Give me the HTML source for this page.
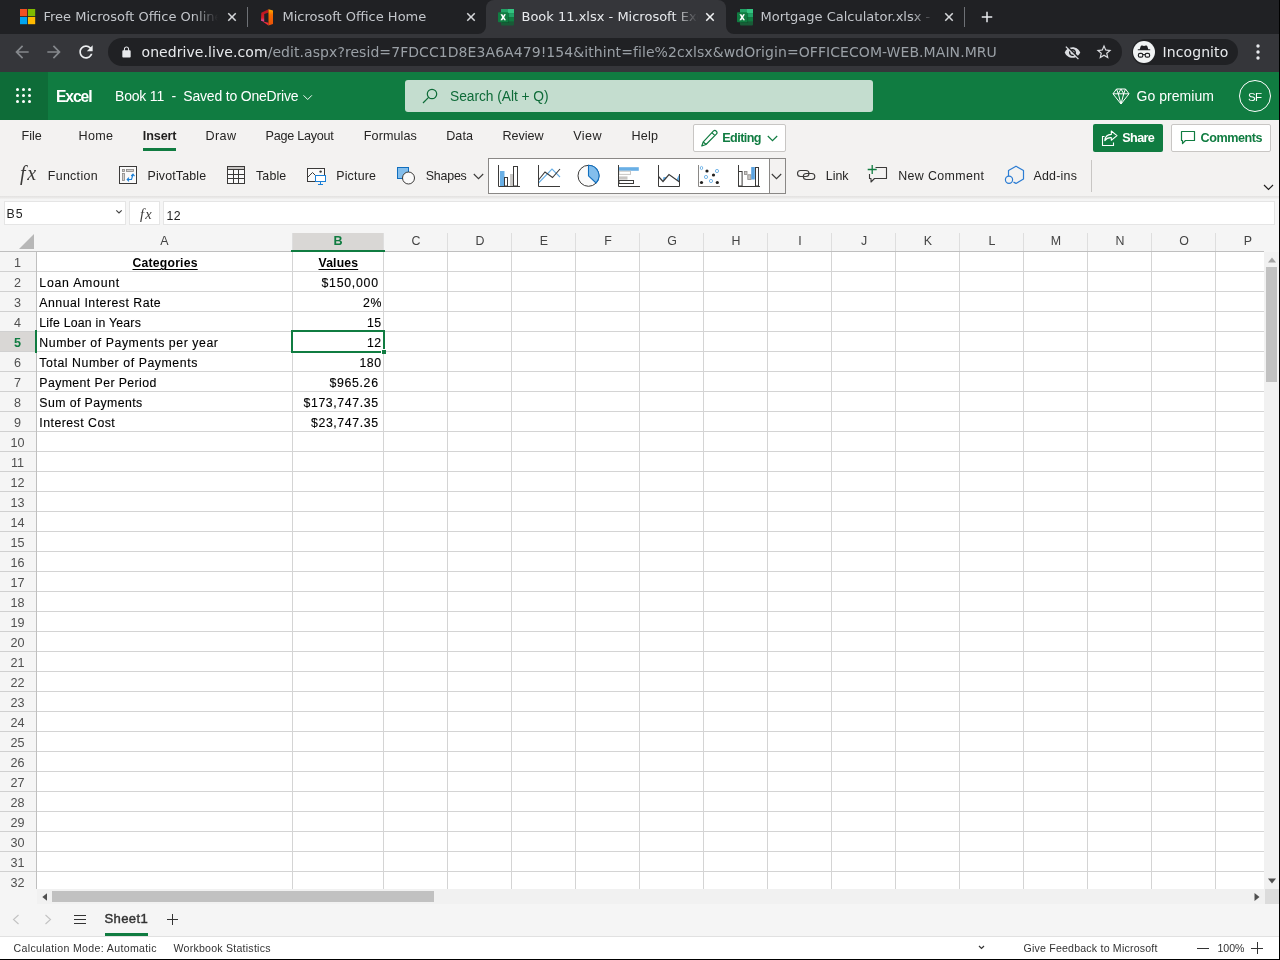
<!DOCTYPE html>
<html lang="en"><head><meta charset="utf-8"><title>Book 11.xlsx - Microsoft Excel Online</title>
<style>
*{box-sizing:border-box;margin:0;padding:0}
html,body{width:1280px;height:960px;overflow:hidden;background:#fff}
body{position:relative;font-family:"Liberation Sans",sans-serif;font-size:13px;color:#252423}
div,span,svg{position:absolute}
#root{left:0;top:0;width:1280px;height:960px;overflow:hidden;will-change:transform}
.t{white-space:pre}
/* ---------- browser chrome ---------- */
#tabstrip{left:0;top:0;width:1280px;height:34px;background:#202124}
#toolbar{left:0;top:34px;width:1280px;height:38px;background:#35363a}
.tabt{font-family:"DejaVu Sans",sans-serif;font-size:13px;color:#c3c6cb;top:8px;line-height:18px;white-space:pre;overflow:hidden;height:18px}
#acttab{left:486px;top:0;width:240px;height:34px;background:#35363a;border-radius:8px 8px 0 0}
.tabsep{top:7px;width:1px;height:20px;background:#6e7176}
#omni{left:108px;top:38px;width:1014px;height:28px;border-radius:14px;background:#202124}
#url{letter-spacing:.068px;left:141.5px;top:43px;font-family:"DejaVu Sans",sans-serif;font-size:14px;line-height:19px;color:#9aa0a6;white-space:pre}
#url b{font-weight:400;color:#e8eaed}
#incog{left:1132px;top:39px;width:106px;height:26px;border-radius:13px;background:#202124}
/* ---------- excel header ---------- */
#xlhead{left:0;top:72px;width:1280px;height:48px;background:#107c41}
#waffle{left:0;top:72px;width:48px;height:48px;background:#0e6c38}
#search{left:405px;top:80px;width:468px;height:32px;border-radius:3px;background:#c4ddcf}
/* ---------- ribbon ---------- */
#ribbon{left:0;top:120px;width:1280px;height:76px;background:#f3f2f1}
#ribshadow{left:0;top:196px;width:1280px;height:3px;background:linear-gradient(#e2e1e0,#e9e8e7 50%,#f2f2f1)}
.btn{top:124px;height:28px;border-radius:2px}
/* ---------- formula bar ---------- */
#fbar{left:0;top:199px;width:1280px;height:33px;background:#f5f5f5}
.fbox{top:201px;height:24px;background:#fff;border:1px solid #e5e5e5}
/* ---------- grid ---------- */
#grid{left:0;top:232px;width:1280px;height:657px;background:#fff}
#colhdr{left:0;top:228px;width:1264px;height:24px;background:#f5f5f5;border-bottom:1px solid #bfbfbf}
#rowhdr{left:0;top:252px;width:37px;height:637px;border-right:1px solid #bfbfbf;
 background:repeating-linear-gradient(to bottom,#f5f5f5 0,#f5f5f5 19px,#d0d0d0 19px,#d0d0d0 20px)}
#cells{left:37px;top:252px;width:1227px;height:637px;
 background:repeating-linear-gradient(to bottom,#fff 0,#fff 19px,#d4d4d4 19px,#d4d4d4 20px)}
.vl{top:252px;width:1px;height:637px;background:#d4d4d4}
.hl{top:233px;width:1px;height:18px;background:#dedede}
/* ---------- bottom ---------- */
#hscroll{left:37px;top:889px;width:1228px;height:15px;background:#f1f1f1}
#vscroll{left:1264px;top:252px;width:16px;height:637px;background:#f1f1f1}
#vtop{left:1264px;top:228px;width:16px;height:24px;background:#f5f5f5}
#sheetbar{left:0;top:889px;width:1280px;height:48px;background:#f5f5f5;border-bottom:1px solid #e1e1e1}
#status{left:0;top:937px;width:1280px;height:22px;background:#fff}
#botline{left:0;top:959px;width:1280px;height:1px;background:#000}
#rightline{left:1279px;top:0;width:1px;height:960px;background:#000}

</style></head>
<body>
<div id="root">
<!-- browser chrome -->
<div id="tabstrip"></div>
<div id="acttab"></div>
<svg style="left:478px;top:26px" width="8" height="8" viewBox="0 0 8 8"><path d="M8 0v8H0a8 8 0 0 0 8-8z" fill="#35363a"/></svg>
<svg style="left:726px;top:26px" width="8" height="8" viewBox="0 0 8 8"><path d="M0 0v8h8a8 8 0 0 1-8-8z" fill="#35363a"/></svg>
<div id="toolbar"></div>
<div id="omni"></div>
<div id="incog"></div>
<div class="tabsep" style="left:247px"></div>
<div class="tabsep" style="left:964px"></div>
<!-- favicons -->
<svg style="left:20px;top:9px" width="16" height="16" viewBox="0 0 16 16"><rect x="0" y="0" width="7.2" height="7.2" fill="#f25022"/><rect x="8" y="0" width="7.2" height="7.2" fill="#7fba00"/><rect x="0" y="8" width="7.2" height="7.2" fill="#00a4ef"/><rect x="8" y="8" width="7.2" height="7.2" fill="#ffb900"/></svg>
<svg style="left:261px;top:8.500px" width="13" height="17" viewBox="0 0 13 17"><defs><linearGradient id="og" x1="0" y1="0" x2="0" y2="1"><stop offset="0" stop-color="#ffb000"/><stop offset=".35" stop-color="#f56a00"/><stop offset="1" stop-color="#e8500a"/></linearGradient><linearGradient id="rg" x1="0" y1="0" x2="0" y2="1"><stop offset="0" stop-color="#b5121b"/><stop offset=".7" stop-color="#d6202a"/><stop offset="1" stop-color="#e055b8"/></linearGradient></defs><path d="M7.500.2.300 3.700 0 11.800l3.200.9V4.900l4.300-1.300z" fill="url(#rg)"/><path d="M1.600 12.600l5.900 3.800v-2.700l-4.300-1z" fill="#ef2a3c"/><path d="M7.500.2 12 1.400v13.500l-4.500 1.500z" fill="url(#og)"/></svg>
<svg class="xl" style="left:498px;top:8.5px" width="16" height="17" viewBox="0 0 16 17"><rect x="3" y="0" width="13" height="16.500" rx="1" fill="#185c37"/><rect x="3" y="0" width="6.500" height="4.200" fill="#21a366"/><rect x="9.500" y="0" width="6.500" height="4.200" fill="#33c481"/><rect x="3" y="4.200" width="6.500" height="4.100" fill="#107c41"/><rect x="9.500" y="4.200" width="6.500" height="4.100" fill="#21a366"/><rect x="3" y="8.300" width="6.500" height="4.100" fill="#185c37"/><rect x="9.500" y="8.300" width="6.500" height="4.100" fill="#107c41"/><rect x="3.600" y="4" width="7.500" height="10" rx=".8" fill="#0b4a2a" opacity=".55"/><rect x="0" y="3.300" width="10.300" height="10" rx=".8" fill="#107c41"/><path d="M2.500 5.300h1.900l.85 1.800.85-1.800h1.800L6.200 8.300l1.800 3h-1.900l-.9-1.850-.9 1.850H2.400l1.800-3z" fill="#fff"/></svg>
<svg class="xl" style="left:737px;top:8.5px" width="16" height="17" viewBox="0 0 16 17"><rect x="3" y="0" width="13" height="16.500" rx="1" fill="#185c37"/><rect x="3" y="0" width="6.500" height="4.200" fill="#21a366"/><rect x="9.500" y="0" width="6.500" height="4.200" fill="#33c481"/><rect x="3" y="4.200" width="6.500" height="4.100" fill="#107c41"/><rect x="9.500" y="4.200" width="6.500" height="4.100" fill="#21a366"/><rect x="3" y="8.300" width="6.500" height="4.100" fill="#185c37"/><rect x="9.500" y="8.300" width="6.500" height="4.100" fill="#107c41"/><rect x="3.600" y="4" width="7.500" height="10" rx=".8" fill="#0b4a2a" opacity=".55"/><rect x="0" y="3.300" width="10.300" height="10" rx=".8" fill="#107c41"/><path d="M2.500 5.300h1.900l.85 1.800.85-1.800h1.800L6.200 8.300l1.800 3h-1.900l-.9-1.850-.9 1.850H2.400l1.800-3z" fill="#fff"/></svg>
<!-- tab titles -->
<span class="tabt" style="left:43.5px;width:174px;-webkit-mask-image:linear-gradient(to right,#000 150px,transparent 174px)">Free Microsoft Office Online</span>
<span class="tabt" style="left:282.5px;width:180px">Microsoft Office Home</span>
<span class="tabt" style="left:521.5px;width:176px;color:#e8eaed;-webkit-mask-image:linear-gradient(to right,#000 152px,transparent 176px)">Book 11.xlsx - Microsoft Excel Online</span>
<span class="tabt" style="left:760.5px;width:174px;-webkit-mask-image:linear-gradient(to right,#000 150px,transparent 174px)">Mortgage Calculator.xlsx - Microsoft Excel Online</span>
<!-- tab close / new tab -->
<svg style="left:224px;top:9px" width="16" height="16" viewBox="0 0 24 24"><path d="M18.400 7.200 16.800 5.600 12 10.400 7.200 5.600 5.600 7.200 10.400 12 5.600 16.800 7.200 18.400 12 13.600 16.800 18.400 18.400 16.800 13.600 12z" fill="#d5d7da"/></svg>
<svg style="left:463px;top:9px" width="16" height="16" viewBox="0 0 24 24"><path d="M18.400 7.200 16.800 5.600 12 10.400 7.200 5.600 5.600 7.200 10.400 12 5.600 16.800 7.200 18.400 12 13.600 16.800 18.400 18.400 16.800 13.600 12z" fill="#d5d7da"/></svg>
<svg style="left:702px;top:9px" width="16" height="16" viewBox="0 0 24 24"><path d="M18.400 7.200 16.800 5.600 12 10.400 7.200 5.600 5.600 7.200 10.400 12 5.600 16.800 7.200 18.400 12 13.600 16.800 18.400 18.400 16.800 13.600 12z" fill="#f1f3f4"/></svg>
<svg style="left:941px;top:9px" width="16" height="16" viewBox="0 0 24 24"><path d="M18.400 7.200 16.800 5.600 12 10.400 7.200 5.600 5.600 7.200 10.400 12 5.600 16.800 7.200 18.400 12 13.600 16.800 18.400 18.400 16.800 13.600 12z" fill="#d5d7da"/></svg>
<svg style="left:978px;top:8px" width="18" height="18" viewBox="0 0 24 24"><path d="M19 13h-6v6h-2v-6H5v-2h6V5h2v6h6z" fill="#e8eaed"/></svg>
<!-- toolbar icons -->
<svg style="left:12px;top:42px" width="20" height="20" viewBox="0 0 24 24"><path d="M20 11H7.830l5.590-5.590L12 4l-8 8 8 8 1.410-1.410L7.830 13H20v-2z" fill="#85888c"/></svg>
<svg style="left:44px;top:42px" width="20" height="20" viewBox="0 0 24 24"><path d="M12 4l-1.410 1.410L16.170 11H4v2h12.170l-5.580 5.590L12 20l8-8z" fill="#85888c"/></svg>
<svg style="left:76px;top:42px" width="20" height="20" viewBox="0 0 24 24"><path d="M17.650 6.350C16.200 4.900 14.210 4 12 4c-4.420 0-7.990 3.580-7.990 8s3.570 8 7.990 8c3.730 0 6.840-2.550 7.730-6h-2.080c-.82 2.330-3.040 4-5.650 4-3.310 0-6-2.690-6-6s2.690-6 6-6c1.660 0 3.140.69 4.220 1.780L13 11h7V4l-2.350 2.350z" fill="#eceef0"/></svg>
<svg style="left:120.500px;top:45.500px" width="11" height="12" viewBox="3 0 18 23"><path d="M18 8h-1V6c0-2.760-2.240-5-5-5S7 3.240 7 6v2H6c-1.100 0-2 .9-2 2v10c0 1.100.9 2 2 2h12c1.100 0 2-.9 2-2V10c0-1.100-.9-2-2-2zM9 6c0-1.660 1.340-3 3-3s3 1.340 3 3v2H9V6z" fill="#e8eaed"/></svg>
<svg style="left:1063.500px;top:43.500px" width="17" height="17" viewBox="0 0 24 24"><path d="M12 7c2.760 0 5 2.240 5 5 0 .65-.13 1.260-.36 1.830l2.920 2.920c1.510-1.260 2.700-2.890 3.430-4.750-1.730-4.390-6-7.500-11-7.500-1.400 0-2.740.25-3.980.7l2.160 2.160C10.740 7.130 11.350 7 12 7zM2 4.270l2.280 2.280.46.460C3.080 8.300 1.780 10.020 1 12c1.730 4.390 6 7.500 11 7.500 1.550 0 3.030-.3 4.380-.84l.42.420L19.730 22 21 20.730 3.270 3 2 4.270zM7.530 9.800l1.550 1.550c-.05.210-.08.430-.08.650 0 1.660 1.340 3 3 3 .22 0 .44-.03.650-.08l1.550 1.550c-.67.330-1.410.53-2.200.53-2.760 0-5-2.240-5-5 0-.79.200-1.530.53-2.200zm4.310-.78 3.150 3.150.02-.16c0-1.660-1.340-3-3-3l-.17.010z" fill="#dadce0"/></svg>
<svg style="left:1095px;top:43px" width="18" height="18" viewBox="0 0 24 24"><path d="M22 9.240l-7.190-.62L12 2 9.190 8.630 2 9.240l5.460 4.730L5.820 21 12 17.270 18.180 21l-1.630-7.030L22 9.240zM12 15.400l-3.760 2.270 1-4.280-3.320-2.880 4.380-.38L12 6.100l1.710 4.040 4.380.38-3.320 2.880 1 4.280L12 15.400z" fill="#dadce0"/></svg>
<svg style="left:1133px;top:41px" width="22" height="22" viewBox="0 0 22 22"><circle cx="11" cy="11" r="11" fill="#f1f3f4"/><path d="M7.700 5.200c.2-.6.800-.9 1.400-.7l1.900.6 1.900-.6c.6-.2 1.200.1 1.400.7l1 3h1.900v1.100H4.800V8.200h1.900z" fill="#202124"/><rect x="5.400" y="12.400" width="4.400" height="3.800" rx="1.500" fill="none" stroke="#202124" stroke-width="1.200"/><rect x="12.200" y="12.400" width="4.400" height="3.800" rx="1.500" fill="none" stroke="#202124" stroke-width="1.200"/><path d="M9.800 13.800c.8-.4 1.600-.4 2.400 0" fill="none" stroke="#202124" stroke-width="1.100"/></svg>
<svg style="left:1255px;top:43px" width="6" height="18" viewBox="0 0 6 18"><circle cx="3" cy="3" r="1.700" fill="#e8eaed"/><circle cx="3" cy="9" r="1.700" fill="#e8eaed"/><circle cx="3" cy="15" r="1.700" fill="#e8eaed"/></svg>
<span id="url"><b>onedrive.live.com</b>/edit.aspx?resid=7FDCC1D8E3A6A479!154&amp;ithint=file%2cxlsx&amp;wdOrigin=OFFICECOM-WEB.MAIN.MRU</span>
<!-- excel header -->
<div id="xlhead"></div>
<div id="waffle"></div>
<div id="search"></div>
<svg style="left:15px;top:87px" width="18" height="18" viewBox="0 0 18 18" fill="#fff"><circle cx="2.500" cy="2.500" r="1.500"/><circle cx="8.500" cy="2.500" r="1.500"/><circle cx="14.500" cy="2.500" r="1.500"/><circle cx="2.500" cy="8.500" r="1.500"/><circle cx="8.500" cy="8.500" r="1.500"/><circle cx="14.500" cy="8.500" r="1.500"/><circle cx="2.500" cy="14.500" r="1.500"/><circle cx="8.500" cy="14.500" r="1.500"/><circle cx="14.500" cy="14.500" r="1.500"/></svg>
<svg style="left:303px;top:94px" width="10" height="7" viewBox="0 0 10 7"><path d="M.5 1.300l4.200 4.200 4.200-4.200" fill="none" stroke="#fff" stroke-width=".95"/></svg>
<svg style="left:422px;top:88px" width="16" height="16" viewBox="0 0 16 16"><circle cx="10" cy="6" r="4.700" fill="none" stroke="#0e6b38" stroke-width="1.200"/><path d="M6.600 9.400 1 15" stroke="#0e6b38" stroke-width="1.200" fill="none"/></svg>
<svg style="left:1112px;top:88px" width="18" height="17" viewBox="0 0 18 17"><path d="M4.500 1h9L17 5.800 9 16 1 5.800zM1 5.800h16M4.500 1 6.300 5.800 9 16l2.700-10.200L13.500 1M6.300 5.800 9 1l2.700 4.800" fill="none" stroke="#fff" stroke-width="1" stroke-linejoin="round"/></svg>
<div style="left:1239px;top:80px;width:32px;height:32px;border-radius:16px;border:1px solid #fff"></div>
<!-- ribbon -->
<div id="ribbon"></div>
<div id="ribshadow"></div>
<div style="left:143px;top:148px;width:33px;height:3px;background:#107c41"></div>
<div class="btn" style="left:693px;width:93px;background:#fff;border:1px solid #c8c6c4"></div>
<div class="btn" style="left:1093px;width:70px;background:#107c41"></div>
<div class="btn" style="left:1171px;width:100px;background:#fff;border:1px solid #c8c6c4"></div>
<!-- Editing pencil -->
<svg style="left:700px;top:129px" width="19" height="19" viewBox="0 0 19 19"><path d="M13.300 2.200a2.100 2.100 0 0 1 3 3L6 15.500 1.800 17l1.500-4.200zM11.900 3.600l3 3M3.300 12.800l2.700 2.700" fill="none" stroke="#107c41" stroke-width="1.200" stroke-linejoin="round"/></svg>
<svg style="left:767px;top:135px" width="11" height="7" viewBox="0 0 11 7"><path d="M.8 1l4.700 4.700L10.200 1" fill="none" stroke="#107c41" stroke-width="1.200"/></svg>
<!-- Share icon -->
<svg style="left:1101px;top:130px" width="17" height="16" viewBox="0 0 17 16"><path d="M3.500 6.500H1.500v9h11v-3" fill="none" stroke="#fff" stroke-width="1.100"/><path d="M10.300 1 16 5.600l-5.700 4.600V7.600c-3-.2-5 .8-6.500 3 .3-3.600 2.600-6 6.500-6.200z" fill="none" stroke="#fff" stroke-width="1.100" stroke-linejoin="round"/></svg>
<!-- Comments icon -->
<svg style="left:1180px;top:130px" width="16" height="15" viewBox="0 0 16 15"><path d="M1.500 1.500h13v9h-9l-3 3v-3h-1z" fill="none" stroke="#107c41" stroke-width="1.200" stroke-linejoin="round"/></svg>
<!-- PivotTable -->
<svg style="left:119px;top:166px" width="18" height="18" viewBox="0 0 18 18"><rect x=".5" y=".5" width="17" height="17" fill="#fafafa" stroke="#3b3a39"/><rect x="3.500" y="3.500" width="2" height="2" fill="#d2d0ce" stroke="#8a8886" stroke-width=".8"/><rect x="7.500" y="3.500" width="7" height="2" fill="#d2d0ce" stroke="#8a8886" stroke-width=".8"/><rect x="3.500" y="7.500" width="2" height="7" fill="#d2d0ce" stroke="#8a8886" stroke-width=".8"/><path d="M8.300 13.500h4.200l1.500-5M10 11.700l-1.800 1.800 1.800 1.800M12.200 10 14 8.200l1.500 2" fill="none" stroke="#1a7fd6" stroke-width="1.100"/></svg>
<!-- Table -->
<svg style="left:227px;top:166px" width="18" height="18" viewBox="0 0 18 18"><rect x=".5" y=".5" width="17" height="17" fill="#fafafa" stroke="#3b3a39"/><rect x="1" y="1" width="16" height="2.500" fill="#c8c6c4"/><path d="M.5 3.500h17M.5 8.500h17M.5 12.500h17M6.500 3.500v14M11.500 3.500v14" fill="none" stroke="#3b3a39" stroke-width="1"/></svg>
<!-- Picture -->
<svg style="left:306px;top:167px" width="21" height="19" viewBox="0 0 21 19"><rect x="1.500" y="1.500" width="17" height="13" fill="#fafafa" stroke="#3b3a39"/><path d="M1.500 10.500 6.500 5.500l2.500 2.500" fill="none" stroke="#3b3a39"/><circle cx="14.600" cy="4.600" r="1.200" fill="#3b3a39"/><rect x="9.500" y="8.500" width="10" height="6" fill="#fff" stroke="#1a7fd6"/><path d="M14.500 14.500v3M12 17.500h5" fill="none" stroke="#1a7fd6"/></svg>
<!-- Shapes -->
<svg style="left:396px;top:166px" width="20" height="20" viewBox="0 0 20 20"><rect x="1.500" y="1.500" width="11" height="11" fill="#83beec" stroke="#106ebe"/><circle cx="12.500" cy="12" r="6" fill="#fafafa" stroke="#3b3a39"/></svg>
<svg style="left:473px;top:173px" width="11" height="7" viewBox="0 0 11 7"><path d="M.8 1l4.700 4.700L10.200 1" fill="none" stroke="#3b3a39" stroke-width="1.100"/></svg>
<!-- chart gallery -->
<div style="left:488px;top:158px;width:298px;height:36px;background:#fff;border:1px solid #8a8886"></div>
<div style="left:769px;top:159px;width:16px;height:34px;background:#f3f2f1;border-left:1px solid #8a8886"></div>
<svg style="left:771px;top:173px" width="11" height="7" viewBox="0 0 11 7"><path d="M.8 1l4.700 4.700L10.200 1" fill="none" stroke="#3b3a39" stroke-width="1.100"/></svg>
<!-- column chart -->
<svg style="left:497px;top:164px" width="24" height="24" viewBox="0 0 24 24"><rect x="3" y="7" width="4.500" height="15" fill="#69afe5"/><rect x="7.500" y="13.500" width="3" height="8.500" fill="#fff" stroke="#3b3a39"/><rect x="13" y="10" width="3.500" height="12" fill="#c8c6c4"/><rect x="16.500" y="2.500" width="4" height="19.500" fill="#fff" stroke="#3b3a39"/><path d="M1.500 1v21.500H23" fill="none" stroke="#3b3a39"/></svg>
<!-- line chart -->
<svg style="left:537px;top:164px" width="24" height="24" viewBox="0 0 24 24"><path d="M1.500 19 15 5l8 8" fill="none" stroke="#69afe5" stroke-width="1.100"/><path d="M1.500 16 8 8l7.500 5.500L23 5" fill="none" stroke="#3b3a39" stroke-width="1.100"/><path d="M1.500 1v21.500H23" fill="none" stroke="#3b3a39"/></svg>
<!-- pie -->
<svg style="left:576px;top:164px" width="25" height="24" viewBox="0 0 25 24"><circle cx="12.500" cy="11.800" r="10.500" fill="#fafafa" stroke="#3b3a39"/><path d="M12.500 11.800V1.300a10.500 10.500 0 0 1 7.600 17.700z" fill="#83beec" stroke="#106ebe" stroke-width="1.100" stroke-linejoin="round"/></svg>
<!-- bar chart -->
<svg style="left:617px;top:164px" width="24" height="24" viewBox="0 0 24 24"><rect x="2" y="3.200" width="19.800" height="3.600" fill="#69afe5"/><rect x="2" y="7.200" width="11.500" height="3.200" fill="#fff" stroke="#c8c6c4"/><rect x="2" y="12.400" width="8.500" height="3.200" fill="#c8c6c4"/><rect x="2" y="16.500" width="14.500" height="3" fill="#fff" stroke="#3b3a39"/><path d="M1.500 1v21.500H23" fill="none" stroke="#3b3a39"/></svg>
<!-- area chart -->
<svg style="left:657px;top:164px" width="24" height="24" viewBox="0 0 24 24"><path d="M5.500 17 10 13l-3.500 0zM19.500 16l3-6v8z" fill="#69afe5"/><path d="M5.500 17.500 9.500 13.200 7 13.200zM19.800 15.500l2.700-5.300v7.500z" fill="#69afe5"/><path d="M1.500 12.500l4.500 5 6-7 10.500 7.500" fill="none" stroke="#3b3a39" stroke-width="1.200"/><path d="M1.500 1v21.500h21V10" fill="none" stroke="#3b3a39"/></svg>
<!-- scatter -->
<svg style="left:697px;top:164px" width="24" height="24" viewBox="0 0 24 24"><path d="M1.500 1v21.500H23" fill="none" stroke="#8a8886"/><circle cx="10" cy="7" r="1.600" fill="#201f1e"/><circle cx="16.500" cy="11" r="1.600" fill="#201f1e"/><circle cx="4.500" cy="18.500" r="1.600" fill="#201f1e"/><circle cx="20.300" cy="18.500" r="1.600" fill="#201f1e"/><ellipse cx="4.500" cy="4" rx="1.200" ry="1.600" fill="#fff" stroke="#69afe5" stroke-width=".9"/><circle cx="20" cy="7" r="1.600" fill="#fff" stroke="#69afe5" stroke-width=".9"/><circle cx="9" cy="13" r="1.600" fill="#fff" stroke="#69afe5" stroke-width=".9"/><circle cx="14" cy="17" r="1.600" fill="#fff" stroke="#69afe5" stroke-width=".9"/></svg>
<!-- waterfall -->
<svg style="left:737px;top:164px" width="24" height="24" viewBox="0 0 24 24"><rect x="1.500" y="7.500" width="3.600" height="14.500" fill="#fff" stroke="#3b3a39"/><rect x="7.400" y="7.400" width="2.600" height="3" fill="#c8c6c4" stroke="#8a8886" stroke-width=".8"/><rect x="10.800" y="10.800" width="3.200" height="4.700" fill="#c8c6c4" stroke="#8a8886" stroke-width=".8"/><rect x="14.200" y="3" width="3.600" height="12.500" fill="#5ba3e0"/><rect x="18.500" y="3.500" width="3" height="18.500" fill="#fff" stroke="#3b3a39"/><path d="M1.500 1v21.500H23" fill="none" stroke="#3b3a39"/></svg>
<!-- link -->
<svg style="left:796px;top:169px" width="20" height="12" viewBox="0 0 20 12"><rect x="1.500" y="1.500" width="11.500" height="6" rx="3" fill="none" stroke="#3b3a39" stroke-width="1.100"/><rect x="7.300" y="4.500" width="11.500" height="6" rx="3" fill="none" stroke="#3b3a39" stroke-width="1.100"/></svg>
<!-- new comment -->
<svg style="left:866px;top:164px" width="22" height="20" viewBox="0 0 22 20"><path d="M9.500 3.500h11v11h-12l-3.500 3.500v-3.500h-1.500v-4.500" fill="none" stroke="#3b3a39" stroke-width="1.100" stroke-linejoin="round"/><path d="M6.200 1v9M1.700 5.500h9" fill="none" stroke="#107c41" stroke-width="1.300"/></svg>
<!-- add-ins -->
<svg style="left:1003px;top:165px" width="22" height="20" viewBox="0 0 22 20"><path d="M5.500 11V5.500L13 1.200l7.500 4.300v8.600l-7.500 4.300-2.500-1.300" fill="none" stroke="#2b7cd3" stroke-width="1.200" stroke-linejoin="round"/><circle cx="6" cy="14.800" r="3.600" fill="none" stroke="#2b7cd3" stroke-width="1.200"/></svg>
<div style="left:1091px;top:160px;width:1px;height:32px;background:#c8c6c4"></div>
<svg style="left:1263px;top:184px" width="11" height="7" viewBox="0 0 11 7"><path d="M1 1l4.500 4.500L10 1" fill="none" stroke="#201f1e" stroke-width="1.200"/></svg>

<!-- formula bar -->
<div id="fbar"></div>
<div class="fbox" style="left:4px;width:122px"></div>
<div class="fbox" style="left:129px;width:31px"></div>
<div class="fbox" style="left:163px;width:1112px"></div>
<svg style="left:115px;top:209px" width="8" height="6" viewBox="0 0 8 6"><path d="M1.300 1.300 4 4l2.700-2.700" fill="none" stroke="#444" stroke-width="1.200"/></svg>
<!-- grid -->
<div id="grid"></div>
<div id="colhdr"></div>
<div id="rowhdr"></div>
<div id="cells"></div>
<svg style="left:19px;top:234px" width="15" height="15" viewBox="0 0 15 15"><path d="M15 0V15H0z" fill="#b7b7b7"/></svg>
<div class="vl" style="left:292px"></div>
<div class="hl" style="left:292px"></div>
<div class="vl" style="left:383px"></div>
<div class="hl" style="left:383px"></div>
<div class="vl" style="left:447px"></div>
<div class="hl" style="left:447px"></div>
<div class="vl" style="left:511px"></div>
<div class="hl" style="left:511px"></div>
<div class="vl" style="left:575px"></div>
<div class="hl" style="left:575px"></div>
<div class="vl" style="left:639px"></div>
<div class="hl" style="left:639px"></div>
<div class="vl" style="left:703px"></div>
<div class="hl" style="left:703px"></div>
<div class="vl" style="left:767px"></div>
<div class="hl" style="left:767px"></div>
<div class="vl" style="left:831px"></div>
<div class="hl" style="left:831px"></div>
<div class="vl" style="left:895px"></div>
<div class="hl" style="left:895px"></div>
<div class="vl" style="left:959px"></div>
<div class="hl" style="left:959px"></div>
<div class="vl" style="left:1023px"></div>
<div class="hl" style="left:1023px"></div>
<div class="vl" style="left:1087px"></div>
<div class="hl" style="left:1087px"></div>
<div class="vl" style="left:1151px"></div>
<div class="hl" style="left:1151px"></div>
<div class="vl" style="left:1215px"></div>
<div class="hl" style="left:1215px"></div>
<div class="vl" style="left:1279px"></div>
<div style="left:293px;top:233px;width:90px;height:18px;background:#d9d7d5"></div>
<div style="left:291px;top:250px;width:94px;height:2px;background:#107c41"></div>
<div style="left:0;top:332px;width:35px;height:19px;background:#d9d7d5"></div>
<div style="left:35px;top:330px;width:2px;height:23px;background:#107c41"></div>
<div style="left:291px;top:330px;width:94px;height:23px;border:2px solid #107c41;background:#fff"></div>
<div style="left:381px;top:349px;width:6px;height:6px;background:#107c41;border:1px solid #fff;border-right:0;border-bottom:0;width:5px;height:5px"></div>
<div id="vscroll"></div><div id="vtop"></div>
<div id="sheetbar"></div>
<div id="hscroll"></div>
<div style="left:1265px;top:889px;width:15px;height:15px;background:#dcdcdc"></div>
<div style="left:52px;top:891px;width:382px;height:11px;background:#c1c1c1"></div>
<div style="left:1266px;top:267px;width:11px;height:115px;background:#c1c1c1"></div>
<svg style="left:41.500px;top:893px" width="5" height="8" viewBox="0 0 5 8"><path d="M5 .3v7.400L.3 4z" fill="#505050"/></svg>
<svg style="left:1254px;top:893px" width="6" height="8" viewBox="0 0 6 8"><path d="M.5 0v8l5-4z" fill="#505050"/></svg>
<svg style="left:1268px;top:257px" width="8" height="6" viewBox="0 0 8 6"><path d="M0 5.500h8L4 .5z" fill="#a3a3a3"/></svg>
<svg style="left:1268px;top:878px" width="8" height="6" viewBox="0 0 8 6"><path d="M0 .5h8l-4 5z" fill="#505050"/></svg>
<!-- sheet bar -->
<svg style="left:12px;top:914px" width="8" height="11" viewBox="0 0 8 11"><path d="M6.500 1 1.500 5.500l5 4.500" fill="none" stroke="#c2c2c2" stroke-width="1.100"/></svg>
<svg style="left:44px;top:914px" width="8" height="11" viewBox="0 0 8 11"><path d="M1.500 1l5 4.500-5 4.500" fill="none" stroke="#c2c2c2" stroke-width="1.100"/></svg>
<div style="left:74px;top:915px;width:12px;height:1px;background:#333"></div>
<div style="left:74px;top:919px;width:12px;height:1px;background:#333"></div>
<div style="left:74px;top:923px;width:12px;height:1px;background:#333"></div>
<div style="left:105px;top:933px;width:43px;height:3px;background:#107c41"></div>
<div style="left:167px;top:919px;width:11px;height:1px;background:#333"></div>
<div style="left:172px;top:914px;width:1px;height:11px;background:#333"></div>
<div id="status"></div>
<div id="botline"></div>
<div id="rightline"></div>
<svg style="left:978px;top:945px" width="7" height="5" viewBox="0 0 7 5"><path d="M1 1l2.500 2.500L6 1" fill="none" stroke="#333" stroke-width="1.200"/></svg>
<div style="left:1197px;top:948px;width:12px;height:1px;background:#333"></div>
<div style="left:1251px;top:948px;width:12px;height:1px;background:#333"></div>
<div style="left:1256.500px;top:942px;width:1px;height:12px;background:#333"></div>
<span class="t" style="left:1162.5px;top:43px;font-size:14px;line-height:18px;color:#e8eaed;font-family:'DejaVu Sans',sans-serif;letter-spacing:.1px;">Incognito</span>
<span class="t" style="left:56.0px;top:87px;font-size:15.7px;line-height:20px;color:#ffffff;font-weight:700;letter-spacing:-1.12px;">Excel</span>
<span class="t" style="left:115.0px;top:87px;font-size:14px;line-height:18px;color:#ffffff;letter-spacing:-0.19px;">Book 11  -  Saved to OneDrive</span>
<span class="t" style="left:450.0px;top:88px;font-size:13.8px;line-height:18px;color:#0e6b38;letter-spacing:-0.05px;">Search (Alt + Q)</span>
<span class="t" style="left:1136.5px;top:87px;font-size:14px;line-height:18px;color:#ffffff;letter-spacing:0.05px;">Go premium</span>
<span class="t" style="left:1248.0px;top:90px;font-size:11.5px;line-height:15px;color:#ffffff;letter-spacing:-0.70px;">SF</span>
<span class="t" style="left:21.5px;top:128px;font-size:12.6px;line-height:16px;color:#252423;letter-spacing:-0.02px;">File</span>
<span class="t" style="left:78.5px;top:128px;font-size:12.6px;line-height:16px;color:#252423;letter-spacing:0.30px;">Home</span>
<span class="t" style="left:142.8px;top:128px;font-size:12.6px;line-height:16px;color:#201f1e;font-weight:700;letter-spacing:-0.11px;">Insert</span>
<span class="t" style="left:205.5px;top:128px;font-size:12.6px;line-height:16px;color:#252423;letter-spacing:0.37px;">Draw</span>
<span class="t" style="left:265.5px;top:128px;font-size:12.6px;line-height:16px;color:#252423;letter-spacing:-0.25px;">Page Layout</span>
<span class="t" style="left:363.8px;top:128px;font-size:12.6px;line-height:16px;color:#252423;letter-spacing:0.07px;">Formulas</span>
<span class="t" style="left:446.2px;top:128px;font-size:12.6px;line-height:16px;color:#252423;letter-spacing:0.05px;">Data</span>
<span class="t" style="left:502.5px;top:128px;font-size:12.6px;line-height:16px;color:#252423;letter-spacing:-0.06px;">Review</span>
<span class="t" style="left:573.2px;top:128px;font-size:12.6px;line-height:16px;color:#252423;letter-spacing:0.47px;">View</span>
<span class="t" style="left:631.5px;top:128px;font-size:12.6px;line-height:16px;color:#252423;letter-spacing:0.20px;">Help</span>
<span class="t" style="left:722.3px;top:130px;font-size:12.6px;line-height:16px;color:#107c41;font-weight:700;letter-spacing:-0.58px;">Editing</span>
<span class="t" style="left:1122.3px;top:130px;font-size:12.6px;line-height:16px;color:#ffffff;font-weight:700;letter-spacing:-0.63px;">Share</span>
<span class="t" style="left:1200.6px;top:130px;font-size:12.6px;line-height:16px;color:#107c41;font-weight:700;letter-spacing:-0.45px;">Comments</span>
<span class="t" style="left:47.8px;top:168px;font-size:12.4px;line-height:16px;color:#252423;letter-spacing:0.32px;">Function</span>
<span class="t" style="left:147.5px;top:168px;font-size:12.4px;line-height:16px;color:#252423;letter-spacing:0.15px;">PivotTable</span>
<span class="t" style="left:256.0px;top:168px;font-size:12.4px;line-height:16px;color:#252423;letter-spacing:0.16px;">Table</span>
<span class="t" style="left:336.2px;top:168px;font-size:12.4px;line-height:16px;color:#252423;letter-spacing:0.20px;">Picture</span>
<span class="t" style="left:425.8px;top:168px;font-size:12.4px;line-height:16px;color:#252423;letter-spacing:-0.21px;">Shapes</span>
<span class="t" style="left:825.8px;top:168px;font-size:12.4px;line-height:16px;color:#252423;letter-spacing:0.01px;">Link</span>
<span class="t" style="left:898.2px;top:168px;font-size:12.4px;line-height:16px;color:#252423;letter-spacing:0.38px;">New Comment</span>
<span class="t" style="left:1033.4px;top:168px;font-size:12.4px;line-height:16px;color:#252423;letter-spacing:0.26px;">Add-ins</span>
<span class="t" style="left:20.0px;top:160px;font-size:20px;line-height:26px;color:#3b3a39;font-family:'Liberation Serif',serif;font-style:italic;letter-spacing:1.60px;">fx</span>
<span class="t" style="left:140.0px;top:205px;font-size:14.5px;line-height:19px;color:#3b3a39;font-family:'Liberation Serif',serif;font-style:italic;letter-spacing:1.33px;">fx</span>
<span class="t" style="left:6.5px;top:206px;font-size:12.3px;line-height:16px;color:#222;letter-spacing:0.95px;">B5</span>
<span class="t" style="left:166.5px;top:208px;font-size:12.3px;line-height:16px;color:#222;letter-spacing:0.31px;">12</span>
<span class="t" style="left:64.5px;width:200px;text-align:center;top:233px;font-size:12.4px;line-height:16px;color:#444;">A</span>
<span class="t" style="left:238.0px;width:200px;text-align:center;top:233px;font-size:12.6px;line-height:16px;color:#107c41;font-weight:700;">B</span>
<span class="t" style="left:316.0px;width:200px;text-align:center;top:233px;font-size:12.4px;line-height:16px;color:#444;">C</span>
<span class="t" style="left:380.0px;width:200px;text-align:center;top:233px;font-size:12.4px;line-height:16px;color:#444;">D</span>
<span class="t" style="left:444.0px;width:200px;text-align:center;top:233px;font-size:12.4px;line-height:16px;color:#444;">E</span>
<span class="t" style="left:508.0px;width:200px;text-align:center;top:233px;font-size:12.4px;line-height:16px;color:#444;">F</span>
<span class="t" style="left:572.0px;width:200px;text-align:center;top:233px;font-size:12.4px;line-height:16px;color:#444;">G</span>
<span class="t" style="left:636.0px;width:200px;text-align:center;top:233px;font-size:12.4px;line-height:16px;color:#444;">H</span>
<span class="t" style="left:700.0px;width:200px;text-align:center;top:233px;font-size:12.4px;line-height:16px;color:#444;">I</span>
<span class="t" style="left:764.0px;width:200px;text-align:center;top:233px;font-size:12.4px;line-height:16px;color:#444;">J</span>
<span class="t" style="left:828.0px;width:200px;text-align:center;top:233px;font-size:12.4px;line-height:16px;color:#444;">K</span>
<span class="t" style="left:892.0px;width:200px;text-align:center;top:233px;font-size:12.4px;line-height:16px;color:#444;">L</span>
<span class="t" style="left:956.0px;width:200px;text-align:center;top:233px;font-size:12.4px;line-height:16px;color:#444;">M</span>
<span class="t" style="left:1020.0px;width:200px;text-align:center;top:233px;font-size:12.4px;line-height:16px;color:#444;">N</span>
<span class="t" style="left:1084.0px;width:200px;text-align:center;top:233px;font-size:12.4px;line-height:16px;color:#444;">O</span>
<span class="t" style="left:1148.0px;width:200px;text-align:center;top:233px;font-size:12.4px;line-height:16px;color:#444;">P</span>
<span class="t" style="left:-82.5px;width:200px;text-align:center;top:255px;font-size:12.6px;line-height:16px;color:#505050;">1</span>
<span class="t" style="left:-82.5px;width:200px;text-align:center;top:275px;font-size:12.6px;line-height:16px;color:#505050;">2</span>
<span class="t" style="left:-82.5px;width:200px;text-align:center;top:295px;font-size:12.6px;line-height:16px;color:#505050;">3</span>
<span class="t" style="left:-82.5px;width:200px;text-align:center;top:315px;font-size:12.6px;line-height:16px;color:#505050;">4</span>
<span class="t" style="left:-82.5px;width:200px;text-align:center;top:335px;font-size:12.6px;line-height:16px;color:#107c41;font-weight:700;">5</span>
<span class="t" style="left:-82.5px;width:200px;text-align:center;top:355px;font-size:12.6px;line-height:16px;color:#505050;">6</span>
<span class="t" style="left:-82.5px;width:200px;text-align:center;top:375px;font-size:12.6px;line-height:16px;color:#505050;">7</span>
<span class="t" style="left:-82.5px;width:200px;text-align:center;top:395px;font-size:12.6px;line-height:16px;color:#505050;">8</span>
<span class="t" style="left:-82.5px;width:200px;text-align:center;top:415px;font-size:12.6px;line-height:16px;color:#505050;">9</span>
<span class="t" style="left:-82.5px;width:200px;text-align:center;top:435px;font-size:12.6px;line-height:16px;color:#505050;">10</span>
<span class="t" style="left:-82.5px;width:200px;text-align:center;top:455px;font-size:12.6px;line-height:16px;color:#505050;">11</span>
<span class="t" style="left:-82.5px;width:200px;text-align:center;top:475px;font-size:12.6px;line-height:16px;color:#505050;">12</span>
<span class="t" style="left:-82.5px;width:200px;text-align:center;top:495px;font-size:12.6px;line-height:16px;color:#505050;">13</span>
<span class="t" style="left:-82.5px;width:200px;text-align:center;top:515px;font-size:12.6px;line-height:16px;color:#505050;">14</span>
<span class="t" style="left:-82.5px;width:200px;text-align:center;top:535px;font-size:12.6px;line-height:16px;color:#505050;">15</span>
<span class="t" style="left:-82.5px;width:200px;text-align:center;top:555px;font-size:12.6px;line-height:16px;color:#505050;">16</span>
<span class="t" style="left:-82.5px;width:200px;text-align:center;top:575px;font-size:12.6px;line-height:16px;color:#505050;">17</span>
<span class="t" style="left:-82.5px;width:200px;text-align:center;top:595px;font-size:12.6px;line-height:16px;color:#505050;">18</span>
<span class="t" style="left:-82.5px;width:200px;text-align:center;top:615px;font-size:12.6px;line-height:16px;color:#505050;">19</span>
<span class="t" style="left:-82.5px;width:200px;text-align:center;top:635px;font-size:12.6px;line-height:16px;color:#505050;">20</span>
<span class="t" style="left:-82.5px;width:200px;text-align:center;top:655px;font-size:12.6px;line-height:16px;color:#505050;">21</span>
<span class="t" style="left:-82.5px;width:200px;text-align:center;top:675px;font-size:12.6px;line-height:16px;color:#505050;">22</span>
<span class="t" style="left:-82.5px;width:200px;text-align:center;top:695px;font-size:12.6px;line-height:16px;color:#505050;">23</span>
<span class="t" style="left:-82.5px;width:200px;text-align:center;top:715px;font-size:12.6px;line-height:16px;color:#505050;">24</span>
<span class="t" style="left:-82.5px;width:200px;text-align:center;top:735px;font-size:12.6px;line-height:16px;color:#505050;">25</span>
<span class="t" style="left:-82.5px;width:200px;text-align:center;top:755px;font-size:12.6px;line-height:16px;color:#505050;">26</span>
<span class="t" style="left:-82.5px;width:200px;text-align:center;top:775px;font-size:12.6px;line-height:16px;color:#505050;">27</span>
<span class="t" style="left:-82.5px;width:200px;text-align:center;top:795px;font-size:12.6px;line-height:16px;color:#505050;">28</span>
<span class="t" style="left:-82.5px;width:200px;text-align:center;top:815px;font-size:12.6px;line-height:16px;color:#505050;">29</span>
<span class="t" style="left:-82.5px;width:200px;text-align:center;top:835px;font-size:12.6px;line-height:16px;color:#505050;">30</span>
<span class="t" style="left:-82.5px;width:200px;text-align:center;top:855px;font-size:12.6px;line-height:16px;color:#505050;">31</span>
<span class="t" style="left:-82.5px;width:200px;text-align:center;top:875px;font-size:12.6px;line-height:16px;color:#505050;">32</span>
<span class="t" style="left:132.5px;top:255px;font-size:12.2px;line-height:16px;color:#000;font-weight:700;letter-spacing:0.22px;text-decoration:underline;text-underline-offset:1.5px;text-decoration-thickness:1px;">Categories</span>
<span class="t" style="left:318.5px;top:255px;font-size:12.2px;line-height:16px;color:#000;font-weight:700;letter-spacing:0.17px;text-decoration:underline;text-underline-offset:1.5px;text-decoration-thickness:1px;">Values</span>
<span class="t" style="left:39.3px;top:275px;font-size:12.3px;line-height:16px;color:#000;letter-spacing:0.75px;-webkit-text-stroke:.12px #000;">Loan Amount</span>
<span class="t" style="left:39.3px;top:295px;font-size:12.3px;line-height:16px;color:#000;letter-spacing:0.49px;-webkit-text-stroke:.12px #000;">Annual Interest Rate</span>
<span class="t" style="left:39.3px;top:315px;font-size:12.3px;line-height:16px;color:#000;letter-spacing:0.22px;-webkit-text-stroke:.12px #000;">Life Loan in Years</span>
<span class="t" style="left:39.3px;top:335px;font-size:12.3px;line-height:16px;color:#000;letter-spacing:0.56px;-webkit-text-stroke:.12px #000;">Number of Payments per year</span>
<span class="t" style="left:39.3px;top:355px;font-size:12.3px;line-height:16px;color:#000;letter-spacing:0.57px;-webkit-text-stroke:.12px #000;">Total Number of Payments</span>
<span class="t" style="left:39.3px;top:375px;font-size:12.3px;line-height:16px;color:#000;letter-spacing:0.41px;-webkit-text-stroke:.12px #000;">Payment Per Period</span>
<span class="t" style="left:39.3px;top:395px;font-size:12.3px;line-height:16px;color:#000;letter-spacing:0.42px;-webkit-text-stroke:.12px #000;">Sum of Payments</span>
<span class="t" style="left:39.3px;top:415px;font-size:12.3px;line-height:16px;color:#000;letter-spacing:0.48px;-webkit-text-stroke:.12px #000;">Interest Cost</span>
<span class="t" style="left:321.5px;top:275px;font-size:12.3px;line-height:16px;color:#000;letter-spacing:0.74px;-webkit-text-stroke:.12px #000;">$150,000</span>
<span class="t" style="left:363.0px;top:295px;font-size:12.3px;line-height:16px;color:#000;letter-spacing:0.72px;-webkit-text-stroke:.12px #000;">2%</span>
<span class="t" style="left:367.0px;top:315px;font-size:12.3px;line-height:16px;color:#000;letter-spacing:0.31px;-webkit-text-stroke:.12px #000;">15</span>
<span class="t" style="left:367.0px;top:335px;font-size:12.3px;line-height:16px;color:#000;letter-spacing:0.31px;-webkit-text-stroke:.12px #000;">12</span>
<span class="t" style="left:359.5px;top:355px;font-size:12.3px;line-height:16px;color:#000;letter-spacing:0.48px;-webkit-text-stroke:.12px #000;">180</span>
<span class="t" style="left:329.5px;top:375px;font-size:12.3px;line-height:16px;color:#000;letter-spacing:0.67px;-webkit-text-stroke:.12px #000;">$965.26</span>
<span class="t" style="left:303.5px;top:395px;font-size:12.3px;line-height:16px;color:#000;letter-spacing:0.61px;-webkit-text-stroke:.12px #000;">$173,747.35</span>
<span class="t" style="left:311.0px;top:415px;font-size:12.3px;line-height:16px;color:#000;letter-spacing:0.61px;-webkit-text-stroke:.12px #000;">$23,747.35</span>
<span class="t" style="left:104.5px;top:910px;font-size:13.1px;line-height:17px;color:#333;letter-spacing:0.34px;-webkit-text-stroke:.4px #333;">Sheet1</span>
<span class="t" style="left:13.5px;top:941px;font-size:10.6px;line-height:14px;color:#333;letter-spacing:0.34px;">Calculation Mode: Automatic</span>
<span class="t" style="left:173.5px;top:941px;font-size:10.6px;line-height:14px;color:#333;letter-spacing:0.23px;">Workbook Statistics</span>
<span class="t" style="left:1023.5px;top:941px;font-size:10.6px;line-height:14px;color:#333;letter-spacing:0.20px;">Give Feedback to Microsoft</span>
<span class="t" style="left:1217.5px;top:941px;font-size:10.6px;line-height:14px;color:#333;letter-spacing:-0.04px;">100%</span>

</div>
</body></html>
